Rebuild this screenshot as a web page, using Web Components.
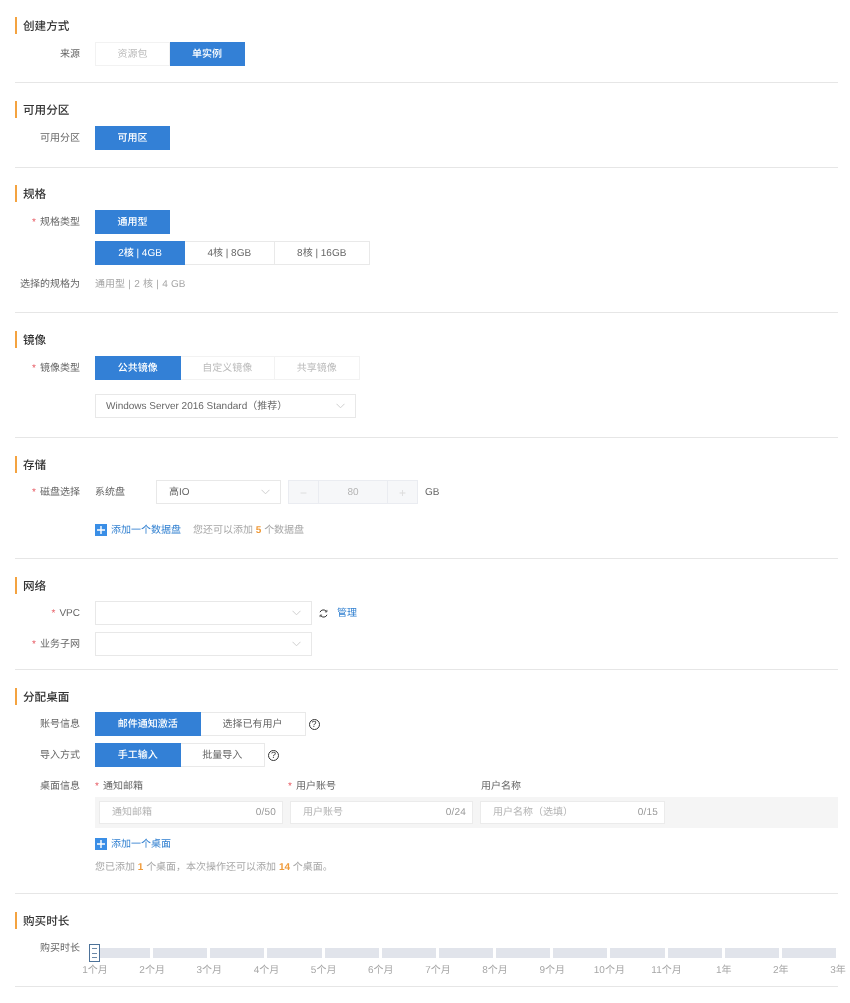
<!DOCTYPE html>
<html lang="zh">
<head>
<meta charset="utf-8">
<title>创建</title>
<style>
  body {
    margin: 0;
    padding: 0 12px 0 15px;
    background: #fff;
    color: #666;
    font: 10px/1.4 "Liberation Sans", "Noto Sans CJK SC", sans-serif;
    text-rendering: geometricPrecision;
    text-spacing-trim: space-all;
  }
  /* the source shot is a downscaled one, everything in it is a bit soft */
  x-section { filter: blur(.35px); }
  .side { padding-top: 1px; color: #666; }
</style>
</head>
<body>
<x-section heading="创建方式" style="--pb:16px">
  <x-row label="来源" style="margin-top:8px">
    <x-seg><x-opt disabled style="width:75px">资源包</x-opt><x-opt active style="width:75px">单实例</x-opt></x-seg>
  </x-row>
</x-section>

<x-section heading="可用分区" style="--pt:18px;--pb:17px">
  <x-row label="可用分区" style="margin-top:8px">
    <x-seg><x-opt active style="width:75px">可用区</x-opt></x-seg>
  </x-row>
</x-section>

<x-section heading="规格" style="--pb:19px">
  <x-row label="规格类型" required style="margin-top:8px">
    <x-seg><x-opt active style="width:75px">通用型</x-opt></x-seg>
  </x-row>
  <x-row style="margin-top:7px">
    <x-seg><x-opt active style="width:90px">2核 | 4GB</x-opt><x-opt style="width:89.5px">4核 | 8GB</x-opt><x-opt style="width:95.5px">8核 | 16GB</x-opt></x-seg>
  </x-row>
  <x-row label="选择的规格为" compact style="margin-top:10px"><x-note style="word-spacing:.5px">通用型 | 2 核 | 4 GB</x-note></x-row>
</x-section>

<x-section heading="镜像" style="--pt:18px;--pb:19px">
  <x-row label="镜像类型" required style="margin-top:8px">
    <x-seg><x-opt active style="width:85.5px">公共镜像</x-opt><x-opt disabled style="width:94.5px">自定义镜像</x-opt><x-opt disabled style="width:84.5px">共享镜像</x-opt></x-seg>
  </x-row>
  <x-row style="margin-top:14px">
    <x-select style="width:261px">Windows Server 2016 Standard（推荐）</x-select>
  </x-row>
</x-section>

<x-section heading="存储" style="--pt:18px;--pb:19px">
  <x-row label="磁盘选择" required style="margin-top:7px">
    <x-inline>
      <span class="side" style="width:61px">系统盘</span>
      <x-select style="width:125px;--indent:12px">高IO</x-select>
      <x-number style="margin-left:7px" value="80"></x-number>
      <span class="side" style="margin-left:7px">GB</span>
    </x-inline>
  </x-row>
  <x-row compact style="margin-top:17px">
    <x-inline>
      <x-add>添加一个数据盘</x-add>
      <x-note style="margin-left:12px">您还可以添加 <x-num>5</x-num>个数据盘</x-note>
    </x-inline>
  </x-row>
</x-section>

<x-section heading="网络" style="--pt:18px;--pb:13px">
  <x-row label="VPC" required style="margin-top:7px">
    <x-inline>
      <x-select style="width:217px"></x-select>
      <x-refresh style="margin-left:7px"></x-refresh>
      <span class="side" style="margin-left:9px;color:#2f7fd0">管理</span>
    </x-inline>
  </x-row>
  <x-row label="业务子网" required style="margin-top:7px">
    <x-select style="width:217px"></x-select>
  </x-row>
</x-section>

<x-section heading="分配桌面" style="--pt:18px;--pb:17px">
  <x-row label="账号信息" style="margin-top:7px">
    <x-inline>
      <x-seg><x-opt active style="width:105.5px">邮件通知激活</x-opt><x-opt style="width:105px">选择已有用户</x-opt></x-seg>
      <x-help style="margin-left:3px"></x-help>
    </x-inline>
  </x-row>
  <x-row label="导入方式" style="margin-top:7px">
    <x-inline>
      <x-seg><x-opt active style="width:85.5px">手工输入</x-opt><x-opt style="width:84.5px">批量导入</x-opt></x-seg>
      <x-help style="margin-left:3px"></x-help>
    </x-inline>
  </x-row>
  <x-row label="桌面信息" compact style="margin-top:10px">
    <x-desktops></x-desktops>
  </x-row>
</x-section>

<x-section heading="购买时长" style="--pt:18px;--pb:10px">
  <x-row label="购买时长" compact style="margin-top:10px">
    <x-duration></x-duration>
  </x-row>
</x-section>

<script>
// Section: orange-barred heading, content, divider along the bottom
class XSection extends HTMLElement {
  constructor() {
    super();
    this.attachShadow({ mode: 'open' });
  }
  connectedCallback() {
    this.shadowRoot.innerHTML = `
      <style>
        :host {
          display: block;
          padding: var(--pt, 17px) 0 var(--pb, 16px);
          border-bottom: 1px solid #e6e6e6;
        }
        h2 {
          margin: 0;
          height: 17px;
          padding-left: 6px;
          border-left: 2px solid #f4a340;
          font-size: 11.6px;
          font-weight: 500;
          line-height: 19px;
          color: #333;
        }
      </style>
      <h2>${this.getAttribute('heading') || ''}</h2>
      <slot></slot>
    `;
  }
}

// Form row: right aligned label column + control column
class XRow extends HTMLElement {
  constructor() {
    super();
    this.attachShadow({ mode: 'open' });
  }
  connectedCallback() {
    const label = this.getAttribute('label') || '';
    const star = this.hasAttribute('required') ? '<i>*</i>' : '';
    this.shadowRoot.innerHTML = `
      <style>
        :host { display: grid; grid-template-columns: 65px 1fr; column-gap: 15px; }
        .label { height: 18px; text-align: right; line-height: 25px; color: #666; white-space: nowrap; }
        :host([compact]) .label { line-height: 19px; }
        i { font-style: normal; color: #e8626a; margin-right: 4px; }
      </style>
      <div class="label">${star}${label}</div>
      <div><slot></slot></div>
    `;
  }
}

class XSeg extends HTMLElement {
  constructor() {
    super();
    this.attachShadow({ mode: 'open' });
    this.shadowRoot.innerHTML = `
      <style>:host { display: inline-flex; vertical-align: top; }</style>
      <slot></slot>
    `;
  }
}

class XOpt extends HTMLElement {
  constructor() {
    super();
    this.attachShadow({ mode: 'open' });
    this.shadowRoot.innerHTML = `
      <style>
        :host {
          display: block;
          box-sizing: border-box;
          height: 24px;
          line-height: 24px;
          text-align: center;
          border: 1px solid #e9e9e9;
          border-left-width: 0;
          background: #fff;
          color: #666;
          white-space: nowrap;
        }
        :host(:first-child) { border-left-width: 1px; }
        :host([disabled]) { color: #bbb; border-color: #f2f2f2; }
        :host([active]) {
          background: #3380d6;
          border-color: #3380d6;
          color: #fff;
          font-weight: 500;
        }
      </style>
      <slot></slot>
    `;
  }
}

class XSelect extends HTMLElement {
  constructor() {
    super();
    this.attachShadow({ mode: 'open' });
    this.shadowRoot.innerHTML = `
      <style>
        :host {
          display: flex;
          align-items: center;
          box-sizing: border-box;
          height: 24px;
          padding: 0 10px 0 var(--indent, 10px);
          border: 1px solid #e8e8e8;
          background: #fff;
          color: #666;
          white-space: nowrap;
        }
        .text { flex: 1; padding-top: 1px; }
        svg { display: block; flex: none; }
      </style>
      <div class="text"><slot></slot></div>
      <svg width="9" height="6" viewBox="0 0 9 6" fill="none" stroke="#cfcfcf" stroke-width="1"><path d="M.5.8l4 4 4-4"/></svg>
    `;
  }
}

class XNumber extends HTMLElement {
  constructor() {
    super();
    this.attachShadow({ mode: 'open' });
  }
  connectedCallback() {
    this.shadowRoot.innerHTML = `
      <style>
        :host {
          display: flex;
          box-sizing: border-box;
          width: 130px;
          height: 24px;
          border: 1px solid #eaecf1;
          background: #f6f7f9;
          color: #b4b4b4;
          line-height: 24px;
          text-align: center;
        }
        div { width: 29px; height: 22px; }
        .value { flex: 1; border: solid #eaecf1; border-width: 0 1px; }
        .step { color: #dcdcdc; font-size: 12px; }
      </style>
      <div class="step">−</div>
      <div class="value">${this.getAttribute('value') || ''}</div>
      <div class="step">+</div>
    `;
  }
}

// Plain flex line for controls that sit next to each other
class XInline extends HTMLElement {
  constructor() {
    super();
    this.attachShadow({ mode: 'open' });
    this.shadowRoot.innerHTML = `
      <style>:host { display: flex; align-items: center; white-space: nowrap; }</style>
      <slot></slot>
    `;
  }
}

class XNote extends HTMLElement {
  constructor() {
    super();
    this.attachShadow({ mode: 'open' });
    this.shadowRoot.innerHTML = `
      <style>:host { display: block; height: 18px; line-height: 19px; color: #a6a6a6; white-space: nowrap; }</style>
      <slot></slot>
    `;
  }
}

class XNum extends HTMLElement {
  constructor() {
    super();
    this.attachShadow({ mode: 'open' });
    this.shadowRoot.innerHTML = `
      <style>:host { color: #f09b3a; font-weight: 700; }</style>
      <slot></slot>
    `;
  }
}

class XAdd extends HTMLElement {
  constructor() {
    super();
    this.attachShadow({ mode: 'open' });
    this.shadowRoot.innerHTML = `
      <style>
        :host { display: flex; align-items: center; height: 18px; color: #2f7fd0; white-space: nowrap; }
        svg { display: block; margin-right: 4px; }
        div { padding-top: 1px; }
      </style>
      <svg width="12" height="12" viewBox="0 0 12 12"><rect width="12" height="12" fill="#3a8ee6"/><path d="M6 2v8M2 6h8" stroke="#fff" stroke-width="1.4"/></svg>
      <div><slot></slot></div>
    `;
  }
}

class XRefresh extends HTMLElement {
  constructor() {
    super();
    this.attachShadow({ mode: 'open' });
    this.shadowRoot.innerHTML = `
      <style>:host { display: block; width: 9px; height: 9px; } svg { display: block; }</style>
      <svg width="9" height="9" viewBox="0 0 9 9" fill="none" stroke="#333" stroke-width="1">
        <path d="M1 3.2A3.6 3.6 0 0 1 7.3 2.4"/><path d="M8 5.8A3.6 3.6 0 0 1 1.7 6.6"/>
        <path d="M7.9.9v2H5.9M1.1 8.1v-2h2" stroke-width=".8"/>
      </svg>
    `;
  }
}

class XHelp extends HTMLElement {
  constructor() {
    super();
    this.attachShadow({ mode: 'open' });
    this.shadowRoot.innerHTML = `
      <style>
        :host {
          display: block;
          box-sizing: border-box;
          width: 11px;
          height: 11px;
          border: 1px solid #333;
          border-radius: 50%;
          font-size: 9px;
          line-height: 9px;
          text-align: center;
          color: #333;
        }
      </style>
      ?
    `;
  }
}

// Single text box with a counter on the right
class XField extends HTMLElement {
  constructor() {
    super();
    this.attachShadow({ mode: 'open' });
  }
  connectedCallback() {
    this.shadowRoot.innerHTML = `
      <style>
        :host {
          display: flex;
          justify-content: space-between;
          align-items: center;
          box-sizing: border-box;
          height: 23px;
          padding: 1px 6px 0 12px;
          border: 1px solid #ebebeb;
          background: #fff;
          color: #b4b4b4;
          white-space: nowrap;
        }
        .count { color: #999; letter-spacing: .2px; }
      </style>
      <span>${this.getAttribute('placeholder') || ''}</span>
      <span class="count">${this.getAttribute('count') || ''}</span>
    `;
  }
}

class XDesktops extends HTMLElement {
  constructor() {
    super();
    this.attachShadow({ mode: 'open' });
    this.shadowRoot.innerHTML = `
      <style>
        :host { display: block; }
        .head { display: grid; grid-template-columns: 193px 193px auto; height: 18px; line-height: 19px; color: #666; }
        i { font-style: normal; color: #e8626a; margin-right: 4px; }
        .band { display: flex; gap: 7px; margin-top: 2px; padding: 4px; background: #f5f5f5; }
        .tip { margin-top: 5px; }
      </style>
      <div class="head">
        <span><i>*</i>通知邮箱</span>
        <span><i>*</i>用户账号</span>
        <span>用户名称</span>
      </div>
      <div class="band">
        <x-field style="width:184px" placeholder="通知邮箱" count="0/50"></x-field>
        <x-field style="width:183px" placeholder="用户账号" count="0/24"></x-field>
        <x-field style="width:185px" placeholder="用户名称（选填）" count="0/15"></x-field>
      </div>
      <x-add style="margin-top:7px">添加一个桌面</x-add>
      <x-note class="tip">您已添加 <x-num>1</x-num> 个桌面，本次操作还可以添加 <x-num>14</x-num> 个桌面。</x-note>
    `;
  }
}

class XDuration extends HTMLElement {
  constructor() {
    super();
    this.attachShadow({ mode: 'open' });
    const names = ['1个月', '2个月', '3个月', '4个月', '5个月', '6个月', '7个月', '8个月', '9个月', '10个月', '11个月', '1年', '2年', '3年'];
    const bars = names.slice(1).map(() => '<div class="bar"></div>').join('');
    const ticks = names.map(n => `<div class="tick"><span>${n}</span></div>`).join('');
    this.shadowRoot.innerHTML = `
      <style>
        :host { display: block; position: relative; padding-top: 9px; }
        .track { display: grid; grid-template-columns: repeat(13, 1fr); height: 10px; }
        .bar { margin: 0 2px 0 1px; background: #e1e4eb; }
        .ticks { display: grid; grid-template-columns: repeat(13, 1fr) 0; margin-top: 6px; height: 12px; }
        .tick { display: flex; justify-content: center; width: 0; white-space: nowrap; color: #a6a6a6; line-height: 14px; }
        .handle {
          position: absolute;
          left: -6px;
          top: 5px;
          box-sizing: border-box;
          width: 11px;
          height: 18px;
          padding: 3px 2px;
          display: flex;
          flex-direction: column;
          justify-content: space-between;
          border: 1px solid #4d7299;
          background: #fff;
        }
        .handle b { display: block; height: 1px; background: #6d8aa8; }
      </style>
      <div class="track">${bars}</div>
      <div class="ticks">${ticks}</div>
      <div class="handle"><b></b><b></b><b></b></div>
    `;
  }
}

customElements.define('x-section', XSection);
customElements.define('x-row', XRow);
customElements.define('x-seg', XSeg);
customElements.define('x-opt', XOpt);
customElements.define('x-select', XSelect);
customElements.define('x-number', XNumber);
customElements.define('x-inline', XInline);
customElements.define('x-note', XNote);
customElements.define('x-num', XNum);
customElements.define('x-add', XAdd);
customElements.define('x-refresh', XRefresh);
customElements.define('x-help', XHelp);
customElements.define('x-field', XField);
customElements.define('x-desktops', XDesktops);
customElements.define('x-duration', XDuration);
</script>
</body>
</html>
